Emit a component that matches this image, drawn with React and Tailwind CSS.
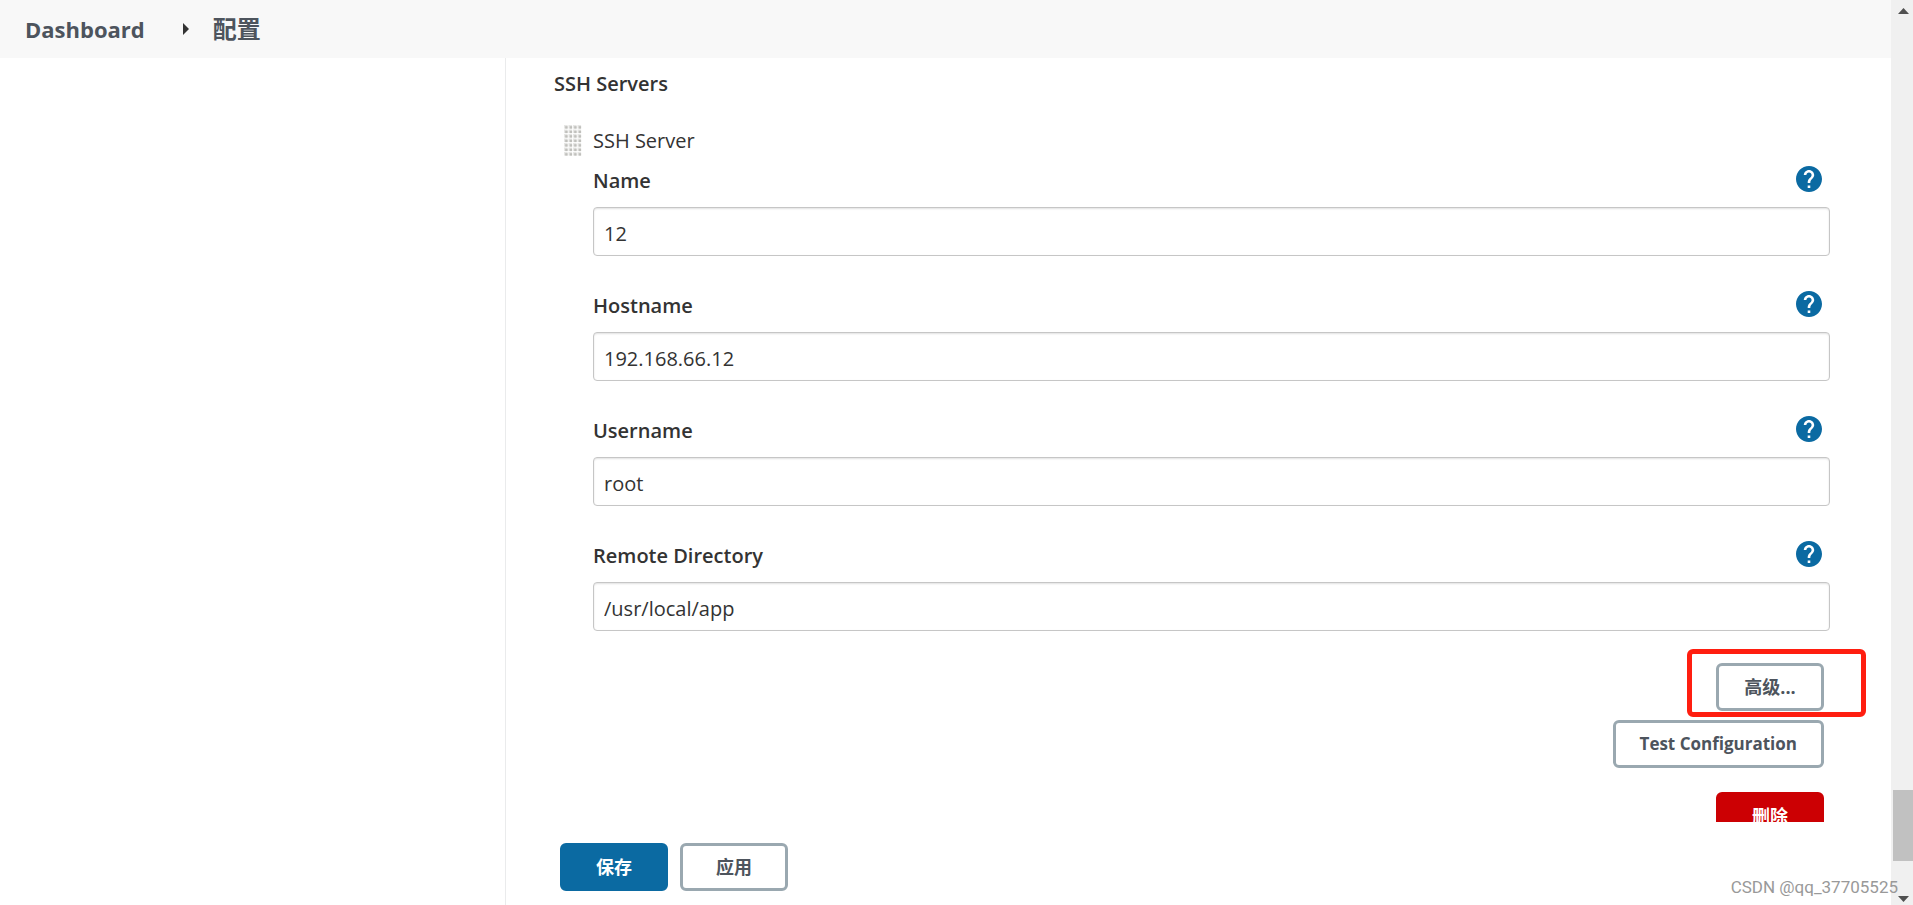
import React, { useState } from 'react';

const initialServer = [
  { id: 'name', label: 'Name', value: '12' },
  { id: 'hostname', label: 'Hostname', value: '192.168.66.12' },
  { id: 'username', label: 'Username', value: 'root' },
  { id: 'remoteDirectory', label: 'Remote Directory', value: '/usr/local/app' },
];

const buttonBase = 'h-12 min-w-[108px] px-6 rounded-md border-3 leading-6 font-bold whitespace-nowrap';
const buttonStyles = {
  default: 'border-[#9aa8b0] bg-white text-[#4d545d]',
  primary: 'border-[#0b6aa2] bg-[#0b6aa2] text-white',
  danger: 'border-[#cc0003] bg-[#cc0003] text-white',
};

function Button({ variant = 'default', size = 'text-[18px]', children, ...props }) {
  return (
    <button type="button" className={`${buttonBase} ${size} ${buttonStyles[variant]}`} {...props}>
      {children}
    </button>
  );
}

function HelpIcon() {
  return (
    <svg viewBox="2 2 20 20" className="size-[26px]" aria-hidden="true">
      <path
        fill="#0b6aa2"
        d="M12 2C6.48 2 2 6.48 2 12s4.48 10 10 10 10-4.48 10-10S17.52 2 12 2zm1 17h-2v-2h2v2zm2.07-7.75l-.9.92C13.45 12.9 13 13.5 13 15h-2v-.5c0-1.1.45-2.1 1.17-2.83l1.24-1.26c.37-.36.59-.86.59-1.41 0-1.1-.9-2-2-2s-2 .9-2 2H8c0-2.21 1.79-4 4-4s4 1.79 4 4c0 .88-.36 1.68-.93 2.25z"
      />
    </svg>
  );
}

function DragHandle() {
  const dots = [];
  for (let row = 0; row < 7; row++) {
    for (let col = 0; col < 4; col++) {
      dots.push(
        <g key={`${row}-${col}`}>
          <rect x={col * 4.5} y={row * 4.5} width="3.6" height="3.6" fill="#e6e6e4" />
          <rect x={col * 4.5 + 1.2} y={row * 4.5 + 1.2} width="2.4" height="2.4" fill="#c0c0bc" />
        </g>
      );
    }
  }
  return (
    <svg viewBox="0 0 18 32" className="h-8 w-[18px]" aria-hidden="true">
      {dots}
    </svg>
  );
}

function Field({ field, onChange }) {
  return (
    <div>
      <div className="flex h-[29px] items-start justify-between pr-2">
        <label htmlFor={field.id} className="text-[20px] leading-[29px] font-semibold">{field.label}</label>
        <a href="#help" aria-label={`Help for ${field.label}`}><HelpIcon /></a>
      </div>
      <input
        id={field.id}
        type="text"
        value={field.value}
        onChange={(e) => onChange(field.id, e.target.value)}
        className="mt-3 block h-[49px] w-full rounded-sm border border-[#c6c6c6] px-2.5 pt-1 text-[20px] shadow-[inset_0_1px_2px_rgba(0,0,0,0.12)] outline-none"
      />
    </div>
  );
}

function Scrollbar() {
  return (
    <div className="flex w-[22px] shrink-0 flex-col items-end bg-[#f0f0f0]">
      <svg viewBox="0 0 22 22" className="size-[22px] fill-[#505050]" aria-hidden="true">
        <path d="M7 14 L12.500 8 L18 14 Z" />
      </svg>
      <div className="flex w-5 flex-1 flex-col justify-end pb-[22px]">
        <div className="h-[71px] bg-[#c1c1c1]" />
      </div>
      <svg viewBox="0 0 22 22" className="size-[22px] fill-[#505050]" aria-hidden="true">
        <path d="M7 13 L12.500 19 L18 13 Z" />
      </svg>
    </div>
  );
}

export default function App() {
  const [fields, setFields] = useState(initialServer);

  const handleChange = (id, value) => {
    setFields(prev => prev.map(f => f.id === id ? { ...f, value } : f));
  };

  return (
    <div className="relative flex h-screen bg-white font-['Open_Sans','Noto_Sans_CJK_SC',sans-serif] text-[#333]">
      <div className="flex min-w-0 flex-1 flex-col">
        <header className="flex h-[58px] shrink-0 items-center bg-[#f8f8f8] pl-[25px] font-bold text-[#4d545d]">
          <a href="#dashboard" className="text-[22px]">Dashboard</a>
          <svg viewBox="0 0 6 12" className="mr-6 ml-[38px] h-3 w-1.5 fill-[#333]" aria-hidden="true">
            <path d="M0 0 L6 6 L0 12 Z" />
          </svg>
          <a href="#configure" className="text-[24px]">配置</a>
        </header>

        <div className="flex min-h-0 flex-1">
          <aside className="w-[506px] shrink-0 border-r border-[#eaebec]" />

          <main className="flex min-w-0 flex-1 flex-col">
            <div className="min-h-0 flex-1 overflow-hidden pt-3 pr-[61px] pl-12">
              <h2 className="text-[20px] leading-7 font-semibold">SSH Servers</h2>

              <div className="mt-[27px] flex h-8 items-center gap-[11px] pl-2.5">
                <DragHandle />
                <span className="text-[20px] leading-7">SSH Server</span>
              </div>

              <div className="mt-[9px] flex flex-col gap-[35px] pl-[39px]">
                {fields.map((field) => (
                  <Field key={field.id} field={field} onChange={handleChange} />
                ))}
              </div>

              <div className="mt-8 flex flex-col items-end pr-1.5">
                <div className="relative">
                  <Button>高级...</Button>
                  <div className="pointer-events-none absolute -top-3.5 -right-[42px] -bottom-1.5 -left-[29px] rounded-md border-5 border-[#ff1e10]" />
                </div>
                <div className="mt-[9px]">
                  <Button size="text-[17px]">Test Configuration</Button>
                </div>
                <div className="mt-6">
                  <Button variant="danger">删除</Button>
                </div>
              </div>
            </div>

            <footer className="flex h-[83px] shrink-0 items-start gap-3 pt-[21px] pl-[54px]">
              <Button variant="primary">保存</Button>
              <Button>应用</Button>
            </footer>
          </main>
        </div>
      </div>

      <Scrollbar />

      <div className="pointer-events-none absolute right-[15px] bottom-1 font-[Roboto,sans-serif] text-[17px] leading-7 text-[#999]">
        CSDN @qq_37705525
      </div>
    </div>
  );
}
